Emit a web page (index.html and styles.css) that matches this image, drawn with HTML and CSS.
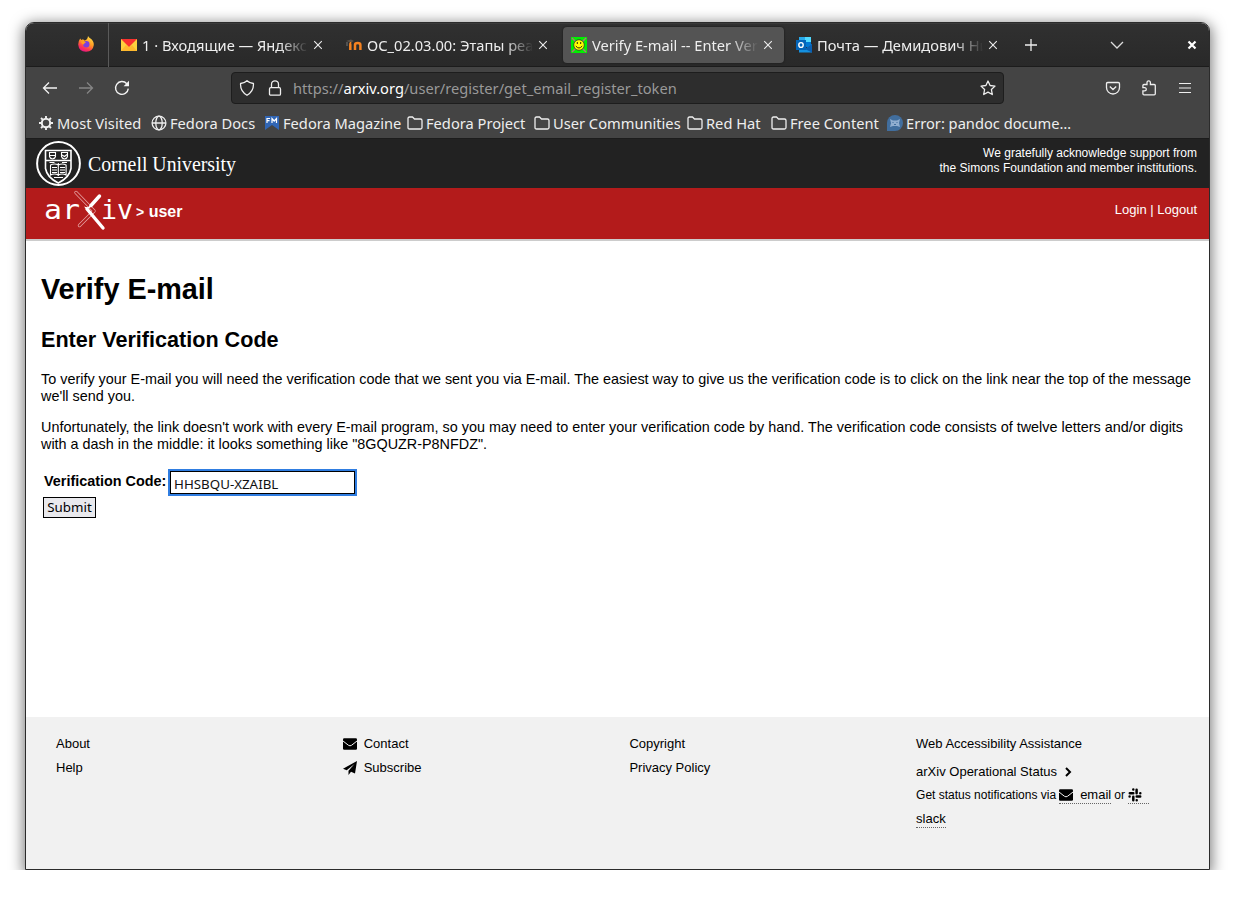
FILE: index.html
```
<!DOCTYPE html>
<html lang="en">
<head>
<meta charset="utf-8">
<title>Verify E-mail -- Enter Verification Code</title>
<link rel="stylesheet" href="styles.css">
</head>
<body>
<svg width="0" height="0" class="defs" aria-hidden="true">
  <symbol id="folder" viewBox="0 0 16 16"><path d="M1 12.5v-9Q1 2 2.5 2h3L7.5 4h6Q15 4 15 5.5v7Q15 14 13.500 14h-11Q1 14 1 12.500z" fill="none" stroke="currentColor" stroke-width="1.3"/></symbol>
  <symbol id="x" viewBox="0 0 10 10"><path d="M1.200 1.200l7.600 7.600M8.800 1.200l-7.600 7.600" stroke="currentColor" stroke-width="1.100"/></symbol>
  <symbol id="mail" viewBox="0 0 14 12"><rect y=".3" width="14" height="11.500" rx="1.200"/><path d="M0 3l5.500 4.300q1.500 1 3 0L14 3" fill="none" stroke="#f1f1f1"/></symbol>
</svg>
<div class="window">
  <div class="tabs">
    <div class="pinned">
      <svg width="16" height="16" viewBox="0 0 16 16"><defs><linearGradient id="ff" x1=".8" y1="0" x2=".3" y2="1"><stop offset="0" stop-color="#ffe34a"/><stop offset=".45" stop-color="#ff9a24"/><stop offset=".75" stop-color="#ff3a50"/><stop offset="1" stop-color="#e3128b"/></linearGradient></defs><path d="M10 0Q11 1.500 12.500 2.500Q16 5 15.800 9Q15 15.600 8 15.800Q.8 15.500.2 8.500Q.2 5 2.200 2.500L3.300 4L5 3.200L6.500 4.600Q9.800 3.500 10 0z" fill="url(#ff)"/><circle cx="8.300" cy="8.300" r="3.200" fill="#7a3fe0"/><path d="M3 5.500Q6 4 8 6.500Q6.200 6.600 6 8.500Q3.500 8.500 3 5.500z" fill="#ff9d1f"/></svg>
    </div>
    <div class="tab">
      <svg width="16" height="12" viewBox="0 0 16 12"><path fill="#ffd23e" d="M0 0h16v12H0z"/><path fill="#fff" d="M0 0"/><path fill="#ffb92d" d="M0 12l5-6 3 2.500L11 6l5 6z"/><path fill="#f8312f" d="M0 0h16L8 8z"/></svg>
      <span class="title t1">1 · Входящие — Яндекс Почта</span><svg class="close" width="10" height="10"><use href="#x"/></svg>
    </div>
    <div class="tab">
      <svg width="16" height="16" viewBox="0 0 16 16"><path d="M0 4l5-1.500 3 1.500-3 1.500z" fill="#5b5148"/><path d="M1 5v4" stroke="#777"/><path d="M4.300 13V8q0-2 1-2M9 13V7.800q0-1.800 2.700-1.800T14.400 8v5" fill="none" stroke="#f58220" stroke-width="2.500"/></svg>
      <span class="title t2">ОС_02.03.00: Этапы реализации</span><svg class="close" width="10" height="10"><use href="#x"/></svg>
    </div>
    <div class="tab active">
      <svg width="16" height="16" viewBox="0 0 16 16"><path fill="#00f000" d="M0 0h16v16H0z"/><path d="M1 1l14 14M15 1L1 15" stroke="#a77" stroke-width="1.500"/><circle cx="8" cy="8" r="5.300" fill="#ff0" stroke="#333" stroke-width=".8"/><path d="M6.300 5v2M9.700 5v2M4.800 9q3.200 4 6.400 0" fill="none" stroke="#321"/></svg>
      <span class="title t3">Verify E-mail -- Enter Verification</span><svg class="close" width="10" height="10"><use href="#x"/></svg>
    </div>
    <div class="tab">
      <svg width="16" height="16" viewBox="0 0 16 16"><path fill="#50d9ff" d="M9 0h6v6H9z"/><path fill="#28a8ea" d="M3 0h6v6H3z"/><path fill="#0078d4" d="M3 5h12v5H3z"/><path fill="#1490df" d="M3 10l6 2 7-5v8.500H3z"/><path fill="#0a5eb0" d="M9 12l7-5v8.500z"/><path fill="#0364b8" d="M0 3h10v10H0z"/><ellipse cx="5" cy="8" rx="2.200" ry="2.400" fill="none" stroke="#fff" stroke-width="1.400"/></svg>
      <span class="title t4">Почта — Демидович Никита</span><svg class="close" width="10" height="10"><use href="#x"/></svg>
    </div>
    <svg class="plus" width="14" height="14" viewBox="0 0 14 14"><path d="M7 1v12M1 7h12" stroke="#eee" stroke-width="1.300"/></svg>
    <svg class="chev" width="14" height="8" viewBox="0 0 14 8"><path d="M1 1l6 6 6-6" fill="none" stroke="#ddd" stroke-width="1.300"/></svg>
    <svg class="quit" width="10" height="10" viewBox="0 0 10 10"><path d="M1.500 1.500l7 7M8.500 1.500l-7 7" stroke="#fff" stroke-width="2.200"/></svg>
  </div>
  <div class="toolbar">
    <div class="nav">
      <svg width="16" height="16" viewBox="0 0 16 16"><path d="M15 8H1.500M7 2.500L1.500 8L7 13.500" fill="none" stroke="#f2f2f2" stroke-width="1.300"/></svg>
      <svg width="16" height="16" viewBox="0 0 16 16"><path d="M1 8h13.500M9 2.500L14.500 8L9 13.500" fill="none" stroke="#858585" stroke-width="1.300"/></svg>
      <svg width="16" height="16" viewBox="0 0 16 16"><path d="M14.300 8.700A6.400 6.400 0 1 1 12.800 3.800" fill="none" stroke="#f2f2f2" stroke-width="1.400"/><path d="M15 .8v5.400H9.600z" fill="#f2f2f2"/></svg>
    </div>
    <div class="url">
      <svg width="16" height="16" viewBox="0 0 16 16"><path d="M8 .8Q10.500 3.200 14.400 3.500Q15 11 8 15.200Q1 11 1.600 3.500Q5.500 3.200 8 .8z" fill="none" stroke="#eee" stroke-width="1.300"/></svg>
      <svg width="16" height="16" viewBox="0 0 16 16"><rect x="2.500" y="7.700" width="11" height="7.500" rx="1.200" fill="none" stroke="#eee" stroke-width="1.300"/><path d="M4.500 7.500V4.300a3.500 3.500 0 0 1 7 0v3.200" fill="none" stroke="#eee" stroke-width="1.300"/></svg>
      <span class="address">https://<b>arxiv.org</b>/user/register/get_email_register_token</span>
      <svg class="star" width="16" height="16" viewBox="0 0 16 16"><path d="M8 1l2.100 4.500 4.900.6-3.600 3.400.9 5L8 12.100l-4.300 2.400.9-5L1 6.100l4.900-.6z" fill="none" stroke="#eee" stroke-width="1.300" stroke-linejoin="round"/></svg>
    </div>
    <div class="tools">
      <svg width="16" height="16" viewBox="0 0 16 16"><path d="M2.800 2.500h10.400q1.300 0 1.300 1.300V7.500a6.500 6.500 0 0 1-13 0V3.800q0-1.300 1.300-1.300zM4.800 6.500L8 9.500l3.200-3" fill="none" stroke="#eee" stroke-width="1.300"/></svg>
      <svg width="16" height="16" viewBox="0 0 16 16"><path d="M6 4.500V2.800q0-2 1.700-2t1.700 2v1.700h3.800q1.100 0 1.100 1.100v8.200q0 1.100-1.100 1.100H3q-1.100 0-1.100-1.100v-2.900h1.700q1.700 0 1.700-1.600T3.600 7.700H1.900V5.600q0-1.100 1.100-1.100z" fill="none" stroke="#eee" stroke-width="1.300"/></svg>
      <svg width="16" height="16" viewBox="0 0 16 16"><path d="M2 3.500h12M2 8h12M2 12.500h12" stroke="#eee" stroke-width="1.200"/></svg>
    </div>
  </div>
  <div class="bookmarks">
    <span><svg width="16" height="16" viewBox="0 0 16 16"><circle cx="8" cy="8" r="4.200" fill="none" stroke="#eee" stroke-width="2"/><path d="M8 1v3M8 12v3M1 8h3M12 8h3M3 3l2.200 2.200M10.800 10.800L13 13M13 3l-2.200 2.200M5.200 10.800L3 13" stroke="#eee" stroke-width="1.900"/></svg>Most Visited</span>
    <span><svg width="16" height="16" viewBox="0 0 16 16"><g fill="none" stroke="#eee" stroke-width="1.300"><circle cx="8" cy="8" r="6.900"/><ellipse cx="8" cy="8" rx="3.200" ry="6.900"/><path d="M1 8h14"/></g></svg>Fedora Docs</span>
    <span><svg width="16" height="16" viewBox="0 0 16 16"><path d="M1 1h14v14l-7-5-7 5z" fill="#3166b5"/><path d="M3 8V3.500h3M3 5.700h2.500M8 8V3.500l2.200 2.500L12.500 3.500V8" fill="none" stroke="#fff" stroke-width="1.200"/></svg>Fedora Magazine</span>
    <span><svg width="16" height="16"><use href="#folder"/></svg>Fedora Project</span>
    <span><svg width="16" height="16"><use href="#folder"/></svg>User Communities</span>
    <span><svg width="16" height="16"><use href="#folder"/></svg>Red Hat</span>
    <span><svg width="16" height="16"><use href="#folder"/></svg>Free Content</span>
    <span><svg width="16" height="16" viewBox="0 0 16 16"><path d="M0 16V8a8 8 0 1 1 8 8z" fill="#416e9e"/><path d="M3 4l3 1.500h4L13 4l-1 4 1 4-3-1H6l-3 1 1-4z" fill="#91aed0"/><path d="M5.500 7.500h1M9.500 7.500h1M7 9.500h2" stroke="#416e9e"/></svg>Error: pandoc docume…</span>
  </div>
  <header class="cornell">
    <svg width="204" height="49" viewBox="0 0 204 49">
      <g fill="none" stroke="#fff"><circle cx="22.500" cy="24.500" r="21.400" stroke-width="2"/><path d="M9.500 11.500h25.500v18q-1.500 9-12.700 14.500Q11 38.500 9.500 29.500z" stroke-width="1.600"/><path d="M9.500 21.500h25.500" stroke-width="1.500"/><path d="M13.500 13.500h6v4q-.5 2-3 2.500-2.500-.5-3-2.500zM25.500 13.500h6v4q-.5 2-3 2.500-2.500-.5-3-2.500zM14 16.500h5M26 16l2.500 1.500L31 15.500" stroke-width="1.100"/><path d="M14.500 26q4-2 7.800 0 4-2 7.800 0v10q-4-2-7.800 0-4-2-7.800 0zM22.300 24v13M16 28.500h5M16 31h5M16 33.500h5M24 28.500h5M24 31h5M24 33.500h5M13.500 23.500h5M26 23.500h5M18 38.500h9" stroke-width="1.100"/></g>
      <text x="52" y="32" textLength="148" lengthAdjust="spacingAndGlyphs">Cornell University</text>
    </svg>
    <p>We gratefully acknowledge support from<br>the Simons Foundation and member institutions.</p>
  </header>
  <div class="banner">
    <svg width="88" height="42" viewBox="0 0 88 42">
      <text x="-1" y="29" textLength="36" lengthAdjust="spacingAndGlyphs">ar</text>
      <text x="56" y="29" textLength="32" lengthAdjust="spacingAndGlyphs">iv</text>
      <g fill="none" stroke-linecap="round"><path d="M31 2.500L49 21M49 21L34.500 35.500" stroke="#e6a5a5" stroke-width="3.400"/><path d="M31 2.500L49 21L34.500 35.500" stroke="#b31b1b" stroke-width="1.900"/><path d="M54.500 6L46 15.500M42 19L58 38" stroke="#fff" stroke-width="3.400"/><path d="M46 15.500Q43.500 18.500 41.500 18L46 23" stroke="#fff" stroke-width="1.800"/></g>
    </svg>
    <strong><small>&gt;</small> user</strong>
    <span class="login">Login | Logout</span>
  </div>
  <main>
    <h1>Verify E-mail</h1>
    <h2>Enter Verification Code</h2>
    <p>To verify your E-mail you will need the verification code that we sent you via E-mail. The easiest way to give us the verification code is to click on the link near the top of the message<br>we'll send you.</p>
    <p class="second">Unfortunately, the link doesn't work with every E-mail program, so you may need to enter your verification code by hand. The verification code consists of twelve letters and/or digits<br>with a dash in the middle: it looks something like "8GQUZR-P8NFDZ".</p>
    <div class="field"><label for="code">Verification Code:</label><input id="code" value="HHSBQU-XZAIBL"></div>
    <button>Submit</button>
  </main>
  <footer>
    <div><p>About</p><p>Help</p></div>
    <div>
      <p><svg width="14" height="12"><use href="#mail"/></svg>Contact</p>
      <p><svg width="14" height="14" viewBox="0 0 14 14"><path d="M14 0l-2 12.500-4-1.700L5.500 14v-4.200L11.500 3 3.700 9.200 0 7.700z"/></svg>Subscribe</p>
    </div>
    <div><p>Copyright</p><p>Privacy Policy</p></div>
    <div>
      <p>Web Accessibility Assistance</p>
      <p class="status">arXiv Operational Status<svg class="next" width="7" height="10" viewBox="0 0 7 10"><path d="M1 1l4 4-4 4" fill="none" stroke="#000" stroke-width="2"/></svg></p>
      <p class="notify"><span class="small">Get status notifications via</span><span class="link mail"><svg width="14" height="12"><use href="#mail"/></svg>email</span><span class="small">or</span><span class="link slackicon"><svg width="14" height="14" viewBox="0 0 14 14"><g stroke="#000" stroke-width="2.500" stroke-linecap="round"><path d="M5.300 1.500v0M5.300 5.200H1.800M8.600 1.700v3.500M12.300 5.200v0M8.700 8.600h3.500M8.700 12.300v0M5.300 8.700v3.500M1.600 8.600v0"/></g></svg></span></p>
      <p class="notify"><span class="link">slack</span></p>
    </div>
  </footer>
</div>
</body>
</html>
```
FILE: styles.css
```
* { box-sizing: border-box; }
body { margin: 0; background: #fff; font-family: "Liberation Sans", Arial, sans-serif; color: #000; }
.defs { position: absolute; }
svg { flex: none; }
.window { width: 1185px; height: 848px; margin: 22px 0 0 25px; border: 1px solid #2b2b2b; border-radius: 9px 9px 0 0; display: flex; flex-direction: column; background: #fff; box-shadow: 0 3px 14px 2px rgba(0,0,0,.5); overflow: hidden; }
.tabs, .toolbar, .bookmarks { font-family: "Noto Sans", sans-serif; font-size: 14.67px; color: #eee; white-space: nowrap; flex: none; }
.tabs { height: 44px; background: linear-gradient(#303030, #292929); border-top: 1px solid #3b3b3b; border-bottom: 1px solid #1c1c1c; display: flex; align-items: center; }
.pinned { width: 83px; height: 44px; padding: 13px 0 0 52px; border-right: 1px solid #5a5a5a; }
.tab { width: 221px; height: 36px; margin-left: 4px; padding: 0 10px 0 8px; display: flex; align-items: center; border-radius: 4px; }
.tab.active { background: #545454; box-shadow: 0 0 2px #151515; }
.title { width: 168px; margin-left: 5px; overflow: hidden; -webkit-mask-image: linear-gradient(90deg, #000 82%, transparent 99%); mask-image: linear-gradient(90deg, #000 82%, transparent 99%); }
.close { margin-left: 3px; }
.plus { margin-left: 15px; }
.chev { margin-left: 72px; }
.quit { margin-left: 63px; }
.toolbar { height: 41px; background: #444; display: flex; align-items: center; }
.nav { width: 205px; padding-left: 16px; display: flex; gap: 20px; }
.url { width: 773px; height: 32px; background: #2d2d2d; border: 1px solid #1d1d1d; border-radius: 4px; display: flex; align-items: center; padding: 0 7px; gap: 12px; }
.address { color: #999; margin-left: -2px; }
.address b { color: #fff; font-weight: 400; }
.star { margin-left: auto; }
.tools { margin-left: 101px; display: flex; gap: 20px; }
.bookmarks { height: 31px; background: #444; border-bottom: 1px solid #1c1c1c; display: grid; grid-template-columns: 113px 113px 143px 127px 153px 84px 116px 200px; padding-left: 12px; align-items: center; }
.bookmarks span { display: flex; align-items: center; gap: 3px; }
.cornell { height: 49px; flex: none; background: #222; color: #fff; display: flex; justify-content: space-between; padding: 0 12px 0 10px; }
.cornell text { font-family: "Liberation Serif", serif; font-size: 22px; fill: #fff; }
.cornell p { font-size: 12px; line-height: 15px; margin: 7px 0 0; text-align: right; }
.banner { height: 53px; flex: none; background: #b31b1b; border-bottom: 2px solid #ccc; display: flex; color: #fff; padding: 2px 12px 0 19px; }
.banner text { font-family: "DejaVu Sans Mono", monospace; font-size: 27px; fill: #fff; }
.banner strong { font-size: 16px; line-height: 44px; margin-left: 3px; }
.banner small { font-size: 14px; }
.login { margin-left: auto; font-size: 13px; line-height: 40px; }
main { height: 476px; flex: none; padding: 31px 15px 0; }
h1 { margin: 0; font-size: 28.8px; line-height: 34px; }
h2 { margin: 20px 0 0; font-size: 21.6px; line-height: 28px; }
main p { margin: 17px 0 0; font-size: 14.4px; line-height: 17px; white-space: nowrap; }
main .second { margin-top: 14px; }
.field { display: flex; align-items: center; margin: 17px 0 0 3px; height: 25px; font-size: 14.4px; font-weight: 700; }
label { width: 126px; white-space: nowrap; line-height: 21px; height: 24px; }
input { font: 13.33px "Noto Sans", sans-serif; width: 185px; height: 23px; padding: 3px 2px 0 3px; border: 1px solid #000; outline: 2px solid #2f7de1; border-radius: 0; color: #111; }
button { display: block; margin: 2px 0 0 2px; width: 53px; height: 21px; padding: 0; border: 1px solid #000; background: #e9e9ed; font: 13.33px/19px "Noto Sans", sans-serif; }
footer { flex: 1; background: #f1f1f1; padding: 15px 30px; display: grid; grid-template-columns: 286.7px 286.7px 286.7px 1fr; font-size: 13px; }
footer p { margin: 0; height: 24px; line-height: 24px; display: flex; align-items: center; gap: 7px; white-space: nowrap; }
.status { margin-top: 4px; }
.next { margin-left: 1px; }
footer .notify { gap: 3px; }
footer .status { height: 23px; }
.small { font-size: 12px; }
.link { line-height: 17px; border-bottom: 1px dotted #666; display: flex; align-items: center; }
.mail { gap: 7px; }
.slackicon { width: 21px; height: 18px; }
```
